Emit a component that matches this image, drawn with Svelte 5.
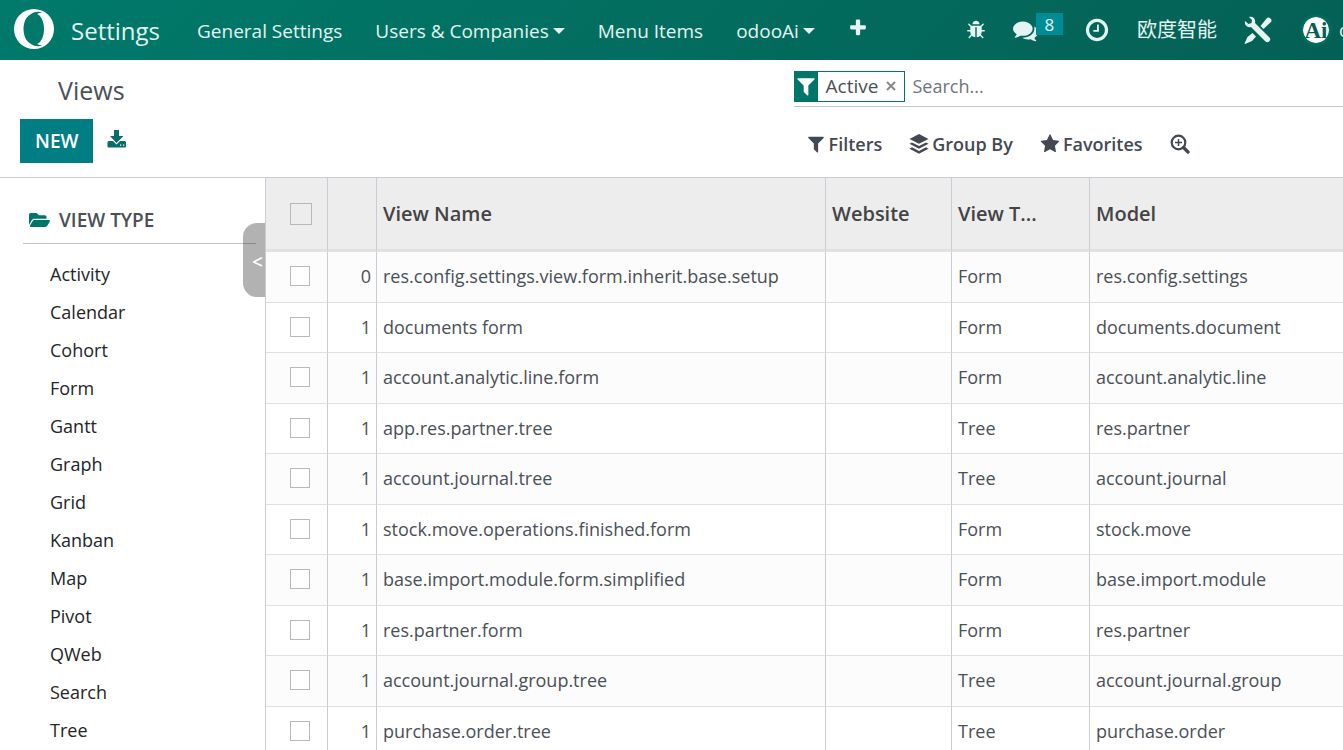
<script>
  const types = ['Activity', 'Calendar', 'Cohort', 'Form', 'Gantt', 'Graph', 'Grid', 'Kanban', 'Map', 'Pivot', 'QWeb', 'Search', 'Tree'];
  const rows = [
    [0, 'res.config.settings.view.form.inherit.base.setup', 'Form', 'res.config.settings'],
    [1, 'documents form', 'Form', 'documents.document'],
    [1, 'account.analytic.line.form', 'Form', 'account.analytic.line'],
    [1, 'app.res.partner.tree', 'Tree', 'res.partner'],
    [1, 'account.journal.tree', 'Tree', 'account.journal'],
    [1, 'stock.move.operations.finished.form', 'Form', 'stock.move'],
    [1, 'base.import.module.form.simplified', 'Form', 'base.import.module'],
    [1, 'res.partner.form', 'Form', 'res.partner'],
    [1, 'account.journal.group.tree', 'Tree', 'account.journal.group'],
    [1, 'purchase.order.tree', 'Tree', 'purchase.order']
  ];
  const filterPath = 'M1595 295q17 41-14 70l-493 493v742q0 42-39 59-13 5-25 5-27 0-45-19l-256-256q-19-19-19-45v-486l-493-493q-31-29-14-70 17-39 59-39h1280q42 0 59 39z';
</script>

<div class="app">
  <header>
    <nav>
      <a class="logo" href="#home" aria-label="Home">
        <svg width="40" height="40" viewBox="0 0 40 40"><path fill-rule="evenodd" d="M20 0a20 20 0 1 0 0 40a20 20 0 1 0 0-40zM20 4.500c3 0 5.500 1.500 7 4 2 3 3 7 3 11.500s-1 8.500-3 11.500c-1.500 2.500-4 4-7 4-6 0-10.500-7-10.500-15.500S14 4.500 20 4.500z"/><path class="cut" d="M17 5q5-3.500 11.500-1.500Q25 3.500 22 5.500l2 1zM17 35q5 3.500 11.500 1.500Q25 36.500 22 34.500l2-1z"/></svg>
      </a>
      <a class="brand" href="#settings">Settings</a>
      <a href="#general">General Settings</a>
      <button>Users &amp; Companies<i class="caret"></i></button>
      <a href="#menu">Menu Items</a>
      <button>odooAi<i class="caret"></i></button>
      <button class="plus" aria-label="Add">
        <svg width="20" height="20" viewBox="0 0 1792 1792"><path d="M1600 736v192q0 40-28 68t-68 28h-416v416q0 40-28 68t-68 28h-192q-40 0-68-28t-28-68v-416h-416q-40 0-68-28t-28-68v-192q0-40 28-68t68-28h416v-416q0-40 28-68t68-28h192q40 0 68 28t28 68v416h416q40 0 68 28t28 68z"/></svg>
      </button>
    </nav>
    <div class="tray">
      <button aria-label="Debug">
        <svg width="20" height="20" viewBox="0 0 1792 1792"><path d="M1696 960q0 26-19 45t-45 19h-224q0 171-67 290l208 209q19 19 19 45t-19 45q-18 19-45 19t-45-19l-198-197q-5 5-15 13t-42 28.500-65 36.500-82 29-97 13v-896h-128v896q-51 0-101.500-13.500t-87-33-66-39-43.500-32.500l-15-14-183 207q-20 21-48 21-24 0-43-16-19-18-20.500-44.500t15.500-46.500l202-227q-58-114-58-274h-224q-26 0-45-19t-19-45 19-45 45-19h224v-294l-173-173q-19-19-19-45t19-45 45-19 45 19l173 173h844l173-173q19-19 45-19t45 19 19 45-19 45l-173 173v294h224q26 0 45 19t19 45zm-480-576h-640q0-133 93.500-226.500t226.500-93.500 226.500 93.500 93.500 226.500z"/></svg>
      </button>
      <button class="chat" aria-label="Messages">
        <svg width="25" height="25" viewBox="0 0 1792 1792"><path d="M1408 768q0 139-94 257t-256.500 186.500-353.500 68.500q-86 0-176-16-124 88-278 128-36 9-86 16h-3q-11 0-20.500-8t-11.500-21q-1-3-1-6.500t.5-6.500 2-6l2.500-5 3.500-5.500 4-5 4.500-5 4-4.500q5-6 23-25t26-29.500 22.500-29 25-38.500 20.500-44q-124-72-195-177t-71-224q0-139 94-257t256.500-186.500 353.500-68.500 353.500 68.500 256.500 186.500 94 257zm384 256q0 120-71 224.500t-195 176.500q10 24 20.500 44t25 38.500 22.500 29 26 29.500 23 25q1 1 4 4.500t4.500 5 4 5 3.500 5.500l2.500 5 2 6 .5 6.500-1 6.500q-3 14-13 22t-22 7q-50-7-86-16-154-40-278-128-90 16-176 16-271 0-472-132 58 4 88 4 161 0 309-45t264-129q125-92 192-212t67-254q0-77-23-152 129 71 204 178t75 230z"/></svg>
        <span class="badge">8</span>
      </button>
      <button aria-label="Activities">
        <svg width="26" height="26" viewBox="0 0 1792 1792"><path d="M1024 544v448q0 14-9 23t-23 9h-320q-14 0-23-9t-9-23v-64q0-14 9-23t23-9h224v-352q0-14 9-23t23-9h64q14 0 23 9t9 23zm416 352q0-148-73-273t-198-198-273-73-273 73-198 198-73 273 73 273 198 198 273 73 273-73 198-198 73-273zm224 0q0 209-103 385.500t-279.500 279.500-385.500 103-385.500-103-279.500-279.500-103-385.500 103-385.500 279.500-279.500 385.500-103 385.500 103 279.500 279.500 103 385.500z"/></svg>
      </button>
      <button class="company">欧度智能</button>
      <button aria-label="Tools">
        <svg width="28" height="28" viewBox="0 0 28 28"><path d="M5 1c4-1 7 2 6 6l14.500 14.500c2.500 2.500-1.500 6.500-4 4L7 11c-4 1-7-2-6-6l3.500 3 3-1 .5-3zM16.500 10L23 2c2-2 6 1.500 4 4l-7.500 7zM8.500 17l3.500 3.500-4 4.500-7 3-.5-.5L3.500 21z"/></svg>
      </button>
      <button class="user">
        <svg class="avatar" width="26" height="26" viewBox="0 0 26 26" aria-hidden="true"><circle cx="13" cy="13" r="13"/><text x="13" y="21" text-anchor="middle">Ai</text></svg>
        <span>o</span>
      </button>
    </div>
  </header>

  <section class="panel">
    <div class="left">
      <h1>Views</h1>
      <div class="actions">
        <button class="new">NEW</button>
        <button class="export" aria-label="Export">
          <svg width="20" height="20" viewBox="0 0 20 20"><path d="M7 1h5v6h4.500L9.500 14 3 7h4z"/><path fill-rule="evenodd" d="M1.500 12H6l3.500 3.500L13 12h4.500Q19 12 19 13.500v4Q19 18.500 18 18.500H1.500Q.5 18.500.5 17.500v-4Q.5 12 1.500 12zM13 15.500v1.300h1.300v-1.300zM16 15.500v1.300h1.300v-1.300z"/></svg>
        </button>
      </div>
    </div>
    <div class="right">
      <div class="search">
        <div class="facet">
          <span class="ficon"><svg width="22" height="22" viewBox="0 0 1792 1792"><path d={filterPath}/></svg></span>
          <span>Active</span>
          <button aria-label="Remove filter"><svg width="10" height="10" viewBox="0 0 10 10"><path d="M1 1l8 8M9 1L1 9" fill="none" stroke="#888" stroke-width="2"/></svg></button>
        </div>
        <input type="text" placeholder="Search..." aria-label="Search" />
      </div>
      <div class="options">
        <button><svg width="20" height="20" viewBox="0 0 1792 1792"><path d={filterPath}/></svg>Filters</button>
        <button><svg width="20" height="20" viewBox="0 0 20 20"><path d="M10 0l9.500 5L10 9.800.5 5zM3 8.500l7 3.500 7-3.500 2.500 1.300L10 14.800.5 9.800zM3 13.300l7 3.600 7-3.600 2.500 1.400L10 19.700.5 14.700z"/></svg>Group By</button>
        <button><svg width="20" height="20" viewBox="0 0 1792 1792"><path d="M1728 647q0 22-26 48l-363 354 86 500q1 7 1 20 0 21-10.500 35.500t-30.500 14.500q-19 0-40-12l-449-236-449 236q-22 12-40 12-21 0-31.500-14.500t-10.500-35.500q0-6 2-20l86-500-364-354q-25-27-25-48 0-37 56-46l502-73 225-455q19-41 49-41t49 41l225 455 502 73q56 9 56 46z"/></svg>Favorites</button>
        <button aria-label="Advanced search"><svg class="zoom" width="20" height="20" viewBox="0 0 20 20"><circle cx="8.500" cy="8.500" r="6.800" stroke-width="2.200"/><path d="M13.500 13.500l4.500 4.500" stroke-width="3.200" stroke-linecap="round"/><path d="M5 8.500h7M8.500 5v7" stroke-width="1.500"/></svg></button>
      </div>
    </div>
  </section>

  <main>
    <aside>
      <h2><svg width="21" height="18" viewBox="0 32 576 448"><path d="M572.694 292.093L500.270 416.248A63.997 63.997 0 0 1 444.989 448H45.025c-18.523 0-30.064-20.093-20.731-36.093l72.424-124.155A64 64 0 0 1 152 256h399.964c18.523 0 30.064 20.093 20.730 36.093zM152 224h328v-48c0-26.510-21.490-48-48-48H272l-64-64H48C21.490 64 0 85.490 0 112v278.046l69.077-118.418C86.214 242.250 117.989 224 152 224z"/></svg>VIEW TYPE</h2>
      <ul>
        {#each types as t}<li><a href="#{t}">{t}</a></li>{/each}
      </ul>
      <button class="fold" aria-label="Collapse sidebar">&lt;</button>
    </aside>
    <div class="list">
      <table>
        <colgroup><col class="c-check" /><col class="c-seq" /><col /><col class="c-site" /><col class="c-type" /><col class="c-model" /></colgroup>
        <thead>
          <tr>
            <th><input type="checkbox" aria-label="Select all" /></th><th></th><th>View Name</th><th>Website</th><th>View T...</th><th>Model</th>
          </tr>
        </thead>
        <tbody>
          {#each rows as [seq, name, type, model]}
            <tr>
              <td><input type="checkbox" aria-label="Select {name}" /></td><td class="num">{seq}</td><td>{name}</td><td></td><td>{type}</td><td>{model}</td>
            </tr>
          {/each}
        </tbody>
      </table>
    </div>
  </main>
</div>

<style>
  :global(body) { margin: 0; background: #fff; }
  .app { height: 100vh; display: flex; flex-direction: column; overflow: hidden; font: 18px/28px "Open Sans", "Noto Sans CJK SC", sans-serif; color: #495057; }
  button { font: inherit; color: inherit; background: none; border: 0; padding: 0; display: flex; align-items: center; flex: none; cursor: pointer; }
  a { color: inherit; text-decoration: none; }
  svg { display: block; flex: none; fill: currentColor; }

  header { flex: none; height: 60px; display: flex; overflow: hidden; color: #e3f4f1; background: linear-gradient(135deg, #007a6b, #046054); white-space: nowrap; }
  nav { display: flex; align-items: center; gap: 33px; padding: 2px 0 0 14px; font-size: 19px; }
  .logo { margin: 0 -16px 4px 0; color: #fff; }
  .cut { fill: #00776a; }
  .brand { font-size: 24px; margin-right: 4px; }
  .caret { border: 6px solid transparent; border-top-color: currentColor; border-bottom: 0; margin-left: 4px; }
  .plus { margin-bottom: 6px; }
  .tray { flex: 1; min-width: 0; display: flex; align-items: center; gap: 27px; padding-left: 98px; }
  .chat { position: relative; width: 44px; }
  .badge { position: absolute; left: 23px; top: -5px; width: 27px; height: 22px; font-size: 17px; line-height: 24px; background: #008c96; }
  .company { font-size: 20px; }
  .user { gap: 10px; flex: 1; margin-left: 4px; }
  .avatar { border-radius: 50%; box-shadow: 0 0 5px #008c74; color: #fff; }
  .avatar text { fill: #045f52; font: 700 23px "Liberation Serif", serif; }

  .panel { flex: none; height: 117px; display: grid; grid-template-columns: 13fr 9fr; border-bottom: 1px solid #c9ccd2; }
  h1 { margin: 0; padding: 12px 0 11px 58px; font-size: 25px; line-height: 36px; font-weight: 400; }
  .actions { display: flex; align-items: center; gap: 14px; padding-left: 20px; }
  .new { height: 44px; padding: 0 15px; background: #017e84; color: #fff; font-size: 19px; font-weight: 600; }
  .export { color: #0b6b69; padding-bottom: 4px; }
  .search { display: flex; align-items: center; gap: 7px; height: 36px; padding-top: 10px; border-bottom: 1px solid #c3c5ca; }
  .facet { display: flex; align-items: center; height: 31px; margin-bottom: 4px; box-sizing: border-box; border: 1px solid #00756a; gap: 8px; padding-right: 8px; font-size: 19px; }
  .ficon { align-self: stretch; width: 23px; display: flex; align-items: center; justify-content: center; background: #00756a; color: #fff; }
  .search input { flex: 1; min-width: 0; border: 0; padding: 0; margin-bottom: 4px; outline: 0; font: inherit; color: inherit; }
  .search input::placeholder { color: #6c757d; opacity: 1; }
  .options { display: flex; gap: 27px; padding: 23px 0 0 12px; font-weight: 600; color: #434952; }
  .options button { gap: 3px; }
  .zoom { fill: none; stroke: currentColor; }

  main { flex: 1; min-height: 0; display: flex; }
  aside { position: relative; flex: none; width: 265px; border-right: 1px solid #c9ccd2; }
  h2 { margin: 22px 9px 0 23px; padding: 6px 6px 9px; display: flex; align-items: center; gap: 9px; border-bottom: 1px solid #c3c5ca; font-size: 19px; font-weight: 600; color: #495057; }
  h2 svg { color: #00756a; }
  ul { list-style: none; margin: 0; padding: 11px 0 0 50px; color: #212529; }
  li { line-height: 38px; }
  .fold { position: absolute; right: 0; top: 45px; width: 22px; height: 74px; padding: 3px 0 0 9px; box-sizing: border-box; color: #fff; font-size: 19px; font-weight: 600; background: rgba(0, 0, 0, .3); border-radius: 14px 0 0 14px; }

  .list { flex: 1; min-width: 0; overflow: hidden; }
  table { width: 100%; table-layout: fixed; border-collapse: separate; border-spacing: 0; white-space: nowrap; }
  .c-check { width: 62px; }
  .c-seq { width: 49px; }
  .c-site { width: 126px; }
  .c-type { width: 138px; }
  .c-model { width: 253px; }
  th, td { box-sizing: border-box; padding: 0 6px; text-align: left; border-right: 1px solid #c9ccd2; border-bottom: 1px solid #dee0e3; overflow: hidden; }
  th:last-child, td:last-child { border-right: 0; }
  th { height: 74px; background: #ededee; border-bottom: 3px solid #e0e1e3; font-size: 20px; font-weight: 600; color: #444; }
  td { height: 51px; padding-bottom: 2px; }
  tr:nth-child(even) td { height: 50px; }
  tbody tr:nth-child(odd) { background: #fcfcfc; }
  td.num { text-align: right; padding-right: 5px; }
  table input { appearance: none; display: block; box-sizing: border-box; width: 20px; height: 20px; margin: 0 0 0 18px; border: 1px solid #b5b8bc; background: #fff; }
  th input { width: 22px; height: 22px; background: none; }
</style>
